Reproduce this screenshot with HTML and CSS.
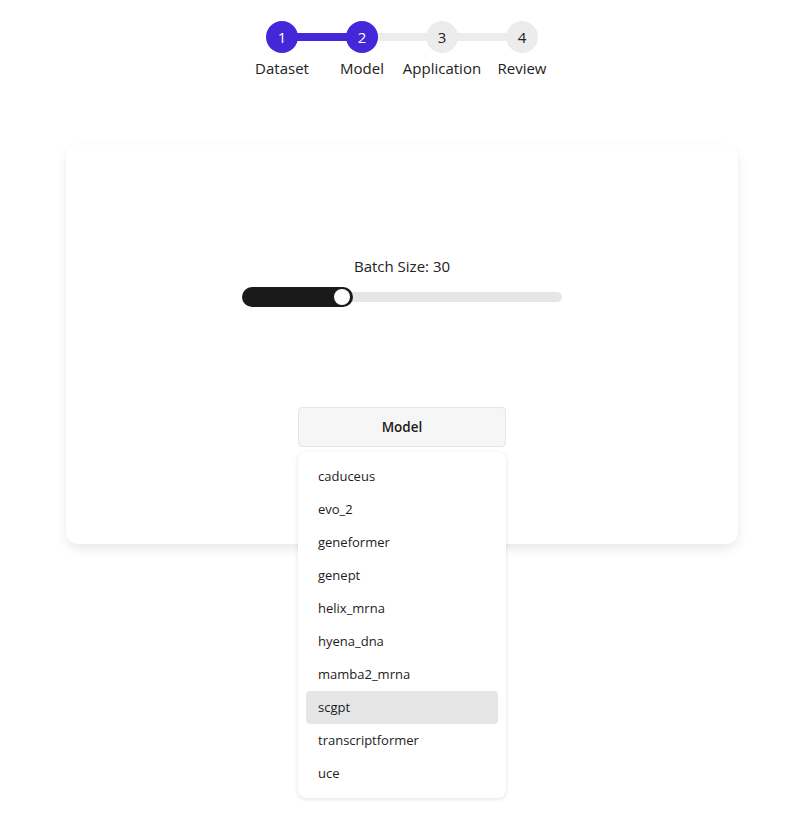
FILE: index.html
```html
<!DOCTYPE html>
<html>
<head>
<meta charset="utf-8">
<link rel="stylesheet" href="styles.css">
</head>
<body>
<div class="page">
  <div class="stepper">
    <div class="step done">
      <div class="bar bar-right active-bar"></div>
      <div class="circle active">1</div>
      <div class="label">Dataset</div>
    </div>
    <div class="step">
      <div class="bar bar-left active-bar"></div>
      <div class="bar bar-right"></div>
      <div class="circle active">2</div>
      <div class="label">Model</div>
    </div>
    <div class="step">
      <div class="bar bar-left"></div>
      <div class="bar bar-right"></div>
      <div class="circle">3</div>
      <div class="label">Application</div>
    </div>
    <div class="step">
      <div class="bar bar-left"></div>
      <div class="circle">4</div>
      <div class="label">Review</div>
    </div>
  </div>

  <div class="card">
    <div class="slider-block">
      <div class="slider-label">Batch Size: 30</div>
      <div class="slider">
        <div class="track"></div>
        <div class="fill"></div>
        <div class="thumb"></div>
      </div>
    </div>
    <div class="select">
      <button class="select-btn">Model</button>
      <ul class="menu">
        <li class="item">caduceus</li>
        <li class="item">evo_2</li>
        <li class="item">geneformer</li>
        <li class="item">genept</li>
        <li class="item">helix_mrna</li>
        <li class="item">hyena_dna</li>
        <li class="item">mamba2_mrna</li>
        <li class="item selected">scgpt</li>
        <li class="item">transcriptformer</li>
        <li class="item">uce</li>
      </ul>
    </div>
  </div>
</div>
</body>
</html>
```
FILE: styles.css
```css
* { box-sizing: border-box; }
html, body {
  min-height: 100%;
}
body {
  margin: 0;
  min-height: 825px;
  background: #ffffff;
  font-family: "Open Sans", "Noto Sans", sans-serif;
  color: #1c1c1c;
}
.page {
  width: 672px;
  margin-left: 66px;
  padding-top: 21px;
  padding-bottom: 40px;
  min-height: 825px;
}
.stepper {
  display: flex;
  justify-content: center;
}
.step {
  position: relative;
  width: 80px;
  display: flex;
  flex-direction: column;
  align-items: center;
}
.bar {
  position: absolute;
  top: 12px;
  height: 8px;
  width: 40px;
  background: #ececec;
}
.bar-left { left: 0; }
.bar-right { right: 0; }
.active-bar { background: #4327d8; }
.circle {
  position: relative;
  width: 32px;
  height: 32px;
  border-radius: 50%;
  background: #ececec;
  color: #222;
  font-size: 15px;
  display: flex;
  align-items: center;
  justify-content: center;
}
.circle.active {
  background: #4327d8;
  color: #fff;
}
.label {
  margin-top: 5px;
  font-size: 15px;
  line-height: 20px;
  color: #222;
  white-space: nowrap;
}
.card {
  margin-top: 67px;
  background: #fff;
  border-radius: 12px;
  box-shadow: 0 5px 12px -1px rgba(0, 0, 0, 0.1);
  padding: 111px 0 97px;
  display: flex;
  flex-direction: column;
  align-items: center;
}
.slider-block {
  display: flex;
  flex-direction: column;
  align-items: center;
}
.slider-label {
  font-size: 15px;
  line-height: 20px;
  color: #222;
}
.slider {
  position: relative;
  margin-top: 11px;
  width: 320px;
  height: 20px;
}
.track {
  position: absolute;
  left: 0;
  right: 0;
  top: 5px;
  height: 10px;
  border-radius: 5px;
  background: #e6e6e6;
}
.fill {
  position: absolute;
  left: 0;
  top: 0;
  width: 111px;
  height: 20px;
  border-radius: 10px;
  background: #1a1a1a;
}
.thumb {
  position: absolute;
  left: 92px;
  top: 2px;
  width: 16px;
  height: 16px;
  border-radius: 50%;
  background: #fff;
}
.select {
  position: relative;
  margin-top: 100px;
  width: 208px;
}
.select-btn {
  display: block;
  width: 100%;
  height: 40px;
  background: #f6f6f6;
  border: 1px solid #e6e6e6;
  border-radius: 4px;
  font-family: inherit;
  font-size: 13.5px;
  font-weight: 600;
  color: #1c1c1c;
}
.menu {
  position: absolute;
  left: 0;
  top: 45px;
  width: 208px;
  margin: 0;
  padding: 8px;
  list-style: none;
  background: #fff;
  border-radius: 8px;
  box-shadow: 0 1px 4px rgba(0, 0, 0, 0.12);
  z-index: 2;
}
.item {
  height: 33px;
  line-height: 33px;
  padding-left: 12px;
  font-size: 13px;
  color: #1c1c1c;
  border-radius: 4px;
}
.item.selected {
  background: #e6e6e6;
}
```
